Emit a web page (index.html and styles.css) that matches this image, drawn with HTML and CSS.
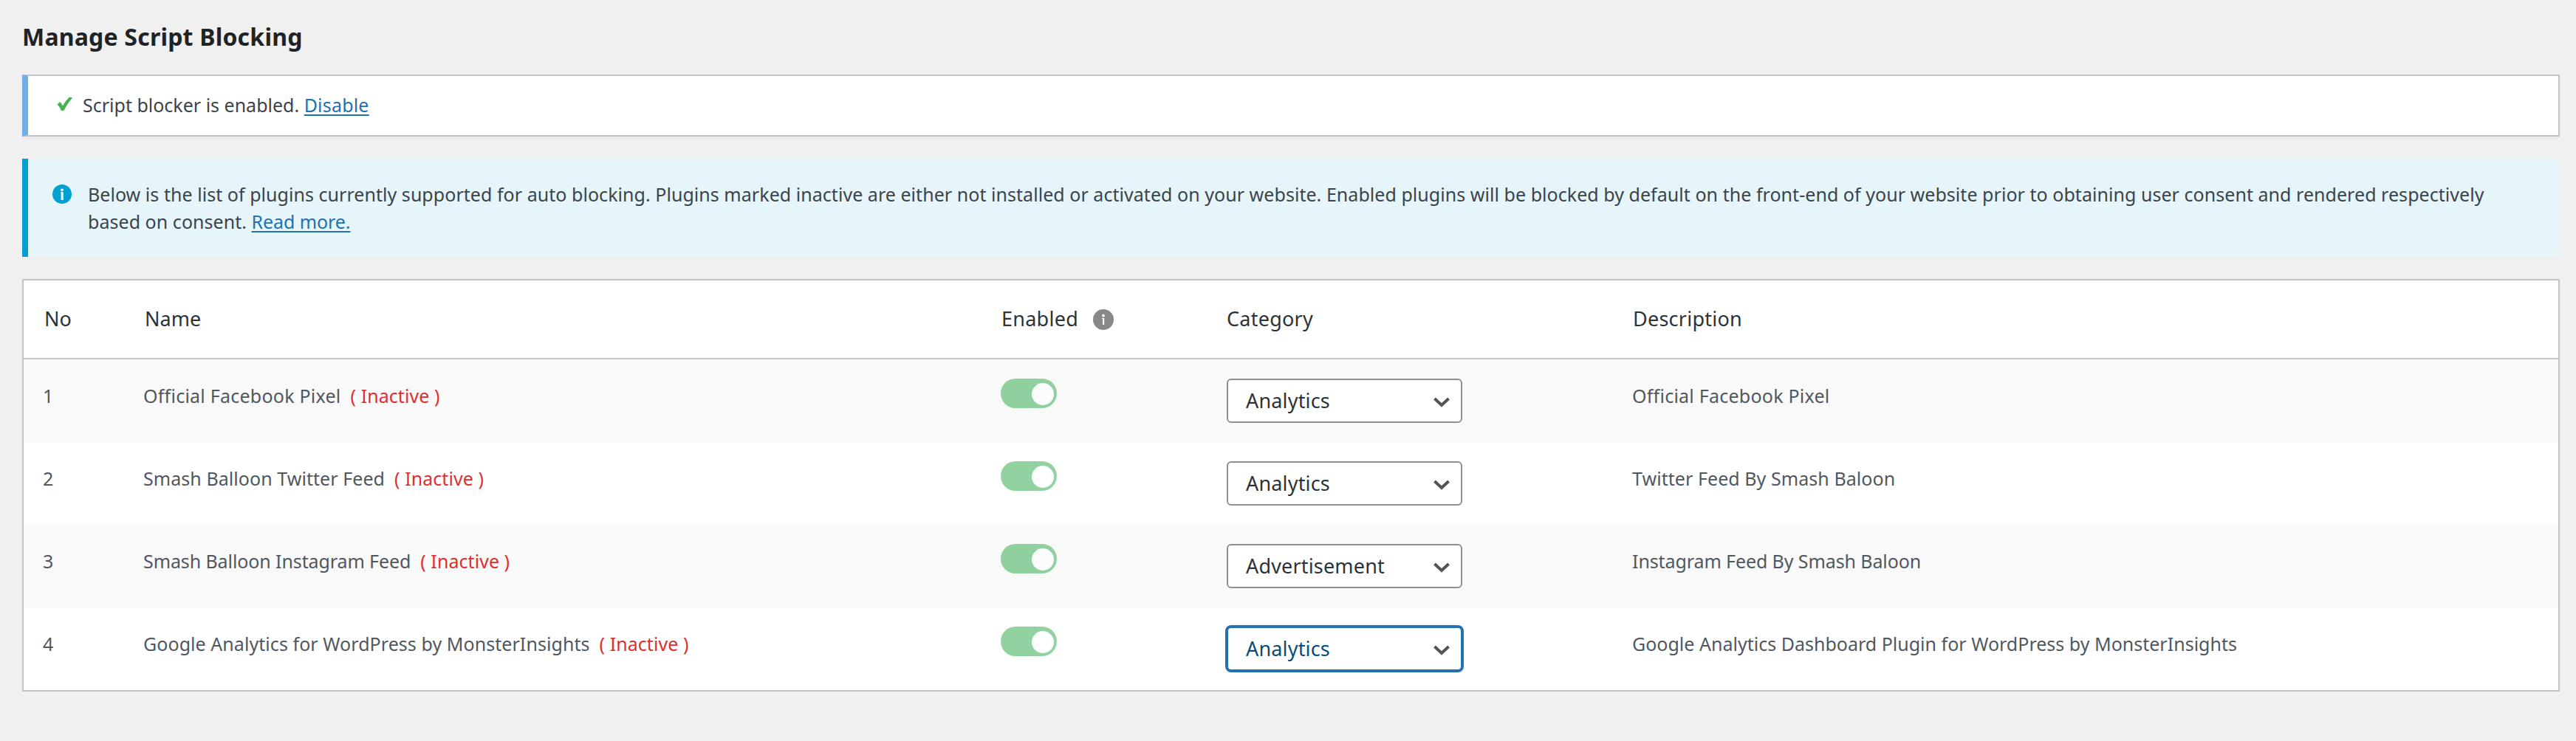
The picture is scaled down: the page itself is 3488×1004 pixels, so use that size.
FILE: index.html
```html
<!DOCTYPE html>
<html lang="en">
<head>
<meta charset="utf-8">
<title>Manage Script Blocking</title>
<link rel="stylesheet" href="styles.css">
</head>
<body>
<main class="wrap">
  <h1 class="title">Manage Script Blocking</h1>

  <div class="notice status">
    <svg class="check" viewBox="0 0 22 20" width="22" height="20"><path d="M.5 10.200 4.600 7 8 12.200 C10.600 7.800 13.600 4 16.800 .6 L21.200 1.600 C16.400 7 12.600 12.400 9.800 18.600 L6.200 19.200 C4.800 16 3 13 .5 10.200Z" fill="#46b450"/></svg>
    <p class="notice-text">Script blocker is enabled. <a class="link link-wide" href="#">Disable</a></p>
  </div>

  <div class="notice info">
    <svg class="info-icon" viewBox="0 0 26 26" width="26" height="26"><circle cx="13" cy="13" r="13" fill="#00a0d2"/><circle cx="13" cy="7.300" r="1.900" fill="#fff"/><path d="M11 10.200h3.700V21H11.600v-9.600H11z" fill="#fff"/></svg>
    <p class="notice-text long">Below is the list of plugins currently supported for auto blocking. Plugins marked inactive are either not installed or activated on your website. Enabled plugins will be blocked by default on the front-end of your website prior to obtaining user consent and rendered respectively based on consent. <a class="link link-snug" href="#">Read more.</a></p>
  </div>

  <div class="table">
    <div class="row head">
      <div>No</div>
      <div>Name</div>
      <div class="enabled-head">Enabled
        <svg viewBox="0 0 28 28" width="28" height="28"><circle cx="14" cy="14" r="14" fill="#888"/><circle cx="14" cy="8.700" r="1.900" fill="#fff"/><path d="M12.200 12h3v9h-2.200v-8h-.8z" fill="#fff"/></svg>
      </div>
      <div class="roomy">Category</div>
      <div class="roomy">Description</div>
    </div>
    <div class="row">
      <div>1</div>
      <div class="name"><span class="roomy">Official Facebook Pixel</span><span class="inactive">( Inactive )</span></div>
      <div class="control"><span class="toggle"></span></div>
      <div class="control"><select class="select"><option>Analytics</option><option>Advertisement</option></select></div>
      <div class="roomy">Official Facebook Pixel</div>
    </div>
    <div class="row">
      <div>2</div>
      <div class="name"><span>Smash Balloon Twitter Feed</span><span class="inactive">( Inactive )</span></div>
      <div class="control"><span class="toggle"></span></div>
      <div class="control"><select class="select"><option>Analytics</option><option>Advertisement</option></select></div>
      <div>Twitter Feed By Smash Baloon</div>
    </div>
    <div class="row">
      <div>3</div>
      <div class="name"><span class="snug">Smash Balloon Instagram Feed</span><span class="inactive">( Inactive )</span></div>
      <div class="control"><span class="toggle"></span></div>
      <div class="control"><select class="select"><option>Analytics</option><option selected>Advertisement</option></select></div>
      <div class="snug">Instagram Feed By Smash Baloon</div>
    </div>
    <div class="row">
      <div>4</div>
      <div class="name"><span>Google Analytics for WordPress by MonsterInsights</span><span class="inactive">( Inactive )</span></div>
      <div class="control"><span class="toggle"></span></div>
      <div class="control"><select class="select active"><option>Analytics</option><option>Advertisement</option></select></div>
      <div class="flat">Google Analytics Dashboard Plugin for WordPress by MonsterInsights</div>
    </div>
  </div>
</main>
</body>
</html>
```
FILE: styles.css
```css
* { box-sizing: border-box; }

body {
  margin: 0;
  background: #f0f0f0;
  color: #3c434a;
  font: 25px/38px "Noto Sans", sans-serif;
}

.wrap { padding: 28px 22px 0 30px; }

.title {
  margin: 0 0 29px;
  font-size: 32px;
  line-height: 44px;
  font-weight: 700;
  letter-spacing: 0.2px;
  color: #1d2327;
}

.notice {
  display: flex;
  align-items: flex-start;
  margin-bottom: 30px;
}
.notice-text { margin: 0; }

.status {
  height: 84px;
  padding: 20px 24px 0 39px;
  gap: 13px;
  background: #fff;
  border: 2px solid #c3c4c7;
  border-left: 8px solid #72aee6;
  box-shadow: 0 2px 2px rgba(0, 0, 0, 0.04);
}
.check { margin-top: 8px; }

.info {
  height: 133px;
  padding: 30px 50px 0 33px;
  gap: 22px;
  line-height: 37px;
  background: #e5f5fa;
  border-left: 8px solid #00a0d2;
}
.info-icon { margin-top: 5px; flex: none; }
.long { letter-spacing: 0.045px; }

.link {
  color: #2271b1;
  text-decoration: underline;
  text-decoration-thickness: 2px;
  text-underline-offset: 3px;
  text-decoration-skip-ink: none;
}
.link-wide { letter-spacing: 0.2px; }
.link-snug { letter-spacing: -0.08px; }

.table {
  background: #fff;
  border: 2px solid #c3c4c7;
  box-shadow: 0 2px 2px rgba(0, 0, 0, 0.04);
}

.row {
  display: grid;
  grid-template-columns: 136px 1161px 306px 549px 1fr;
  height: 112px;
  padding: 30px 0 0 26px;
  color: #50575e;
  letter-spacing: 0.06px;
}
.row:nth-child(even) { background: #f9f9f9; }

.head {
  grid-template-columns: 136px 1160px 305px 550px 1fr;
  height: 107px;
  padding-top: 33px;
  padding-left: 28px;
  font-size: 27px;
  color: #2c3338;
  border-bottom: 2px solid #c3c4c7;
}
.enabled-head {
  display: flex;
  align-items: flex-start;
  gap: 20px;
  letter-spacing: 0.25px;
}
.enabled-head svg { margin-top: 6px; }

.name { display: flex; gap: 13px; }
.inactive { color: #dc2f2f; }

.roomy { letter-spacing: 0.24px; }
.snug { letter-spacing: -0.1px; }
.flat { letter-spacing: 0.01px; }

.control { margin-top: -4px; }

.toggle {
  display: flex;
  justify-content: flex-end;
  width: 76px;
  height: 40px;
  padding: 6px 4px 4px;
  border-radius: 20px;
  background: #4ab563;
  opacity: 0.6;
}
.toggle::after {
  content: "";
  width: 30px;
  height: 30px;
  border-radius: 50%;
  background: #fff;
}

.select {
  display: block;
  width: 319px;
  height: 60px;
  margin: 0;
  padding: 0 48px 0 24px;
  appearance: none;
  border: 2px solid #8c8f94;
  border-radius: 6px;
  background: #fff url('data:image/svg+xml;utf8,<svg xmlns="http://www.w3.org/2000/svg" width="22" height="14" viewBox="0 0 22 14"><path d="M1.500 2 11 11 20.500 2" fill="none" stroke="%23555" stroke-width="4"/></svg>') no-repeat right 15px top 23px;
  color: #2c3338;
  font: 27px/38px "Noto Sans", sans-serif;
  letter-spacing: 0.17px;
}
.select.active {
  border-color: #2271b1;
  box-shadow: 0 0 0 2px #2271b1;
  color: #0a4b78;
}
```
